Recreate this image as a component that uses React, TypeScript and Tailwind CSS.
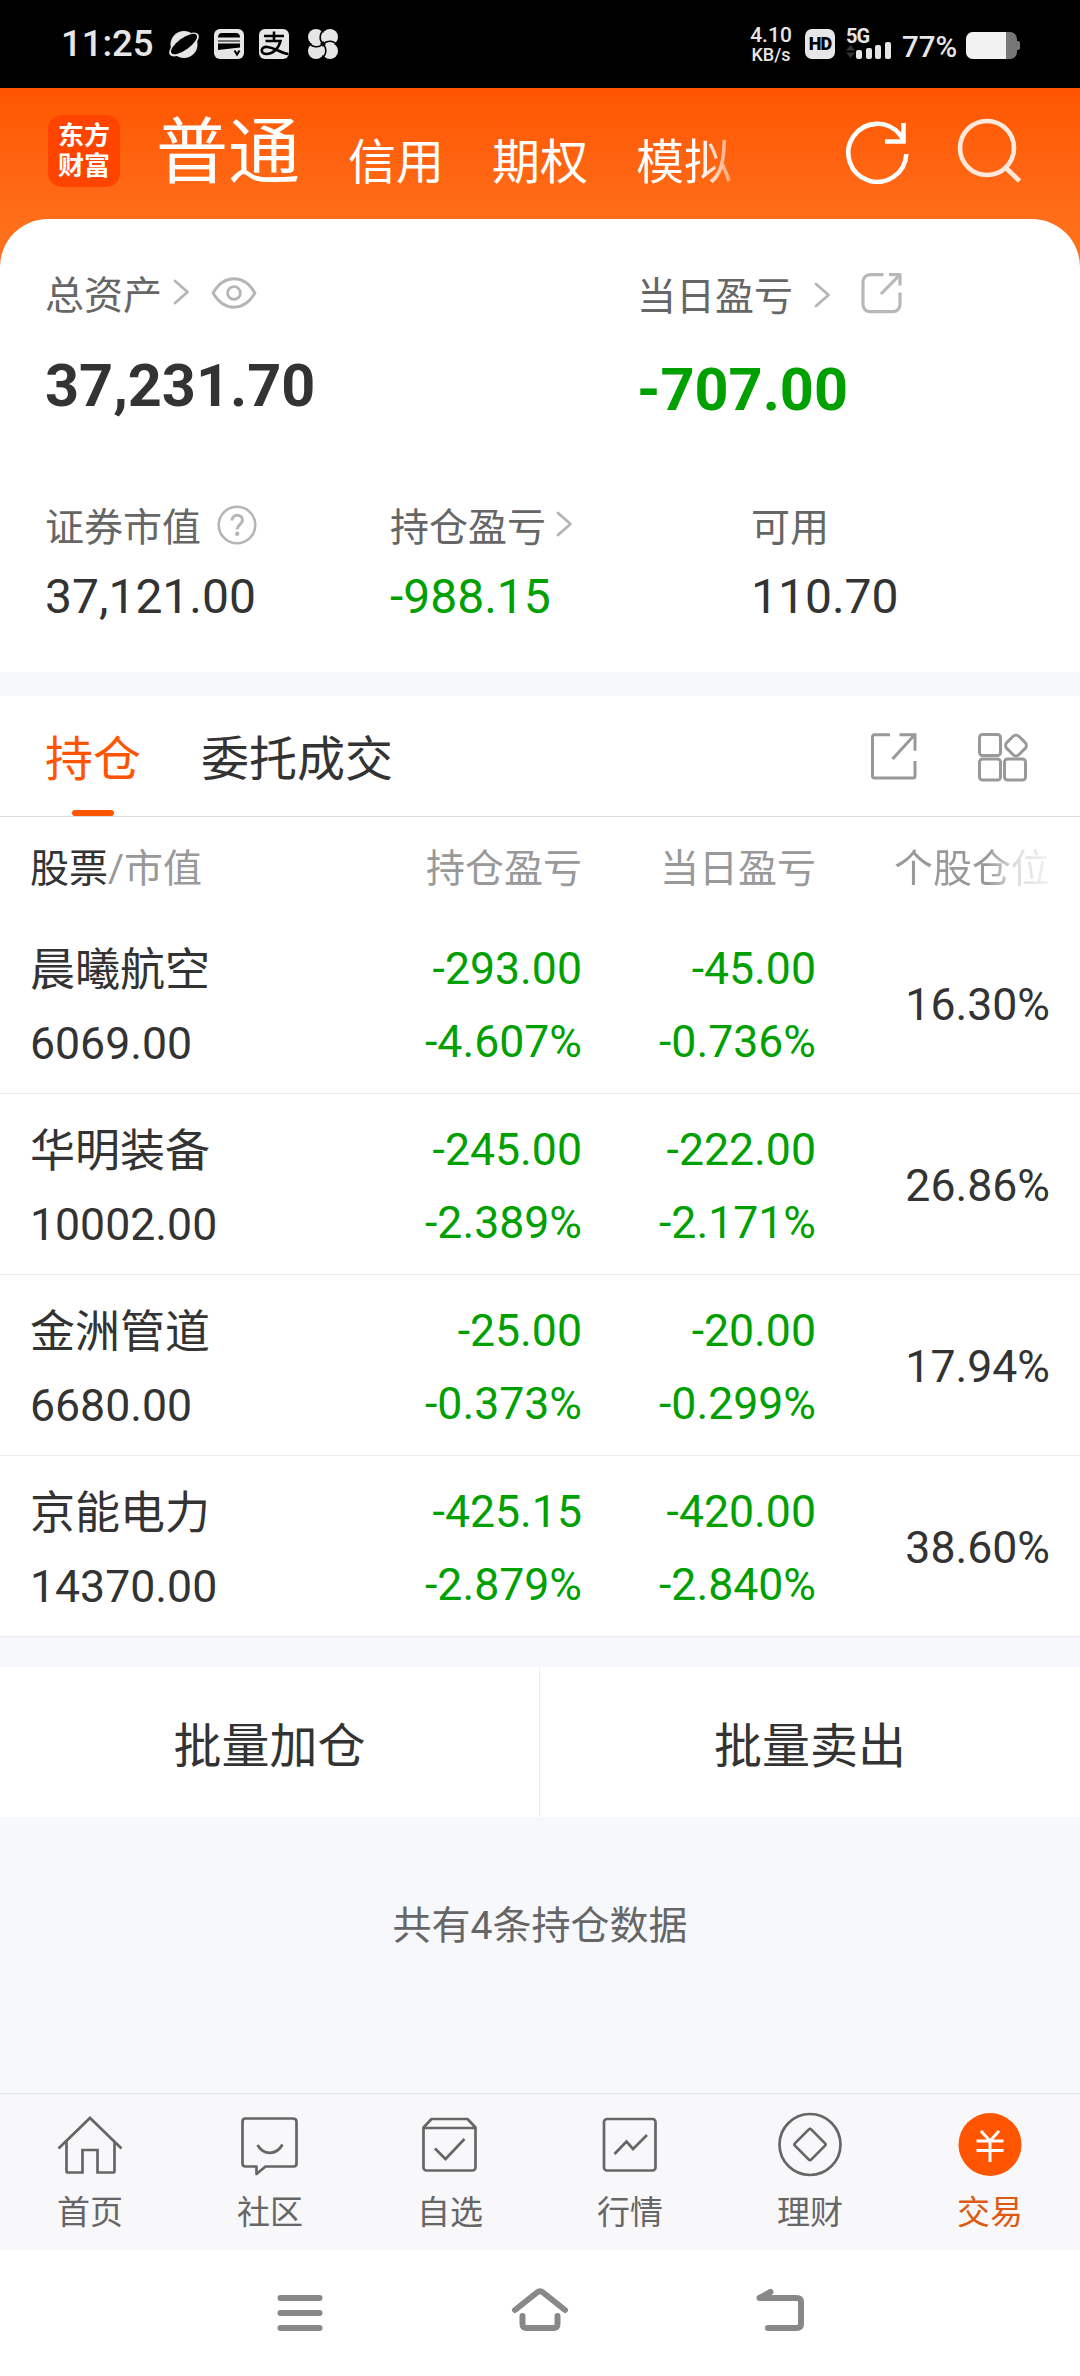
import type { ReactNode } from 'react';

interface Holding {
  name: string;
  value: string;
  profit: string;
  profitRate: string;
  today: string;
  todayRate: string;
  share: string;
}

const HOLDINGS: Holding[] = [
  { name: '晨曦航空', value: '6069.00', profit: '-293.00', profitRate: '-4.607%', today: '-45.00', todayRate: '-0.736%', share: '16.30%' },
  { name: '华明装备', value: '10002.00', profit: '-245.00', profitRate: '-2.389%', today: '-222.00', todayRate: '-2.171%', share: '26.86%' },
  { name: '金洲管道', value: '6680.00', profit: '-25.00', profitRate: '-0.373%', today: '-20.00', todayRate: '-0.299%', share: '17.94%' },
  { name: '京能电力', value: '14370.00', profit: '-425.15', profitRate: '-2.879%', today: '-420.00', todayRate: '-2.840%', share: '38.60%' },
];

const TABS = [
  { label: '首页', icon: <HomeIcon /> },
  { label: '社区', icon: <ChatIcon /> },
  { label: '自选', icon: <WatchlistIcon /> },
  { label: '行情', icon: <MarketIcon /> },
  { label: '理财', icon: <WealthIcon /> },
  { label: '交易', icon: <TradeIcon />, active: true },
];

export default function App() {
  return (
    <div className="flex h-[2376px] w-[1080px] flex-col overflow-hidden bg-[#f6f8fb] font-['Roboto','Noto_Sans_CJK_SC',sans-serif] text-[#333]">
      <StatusBar />
      <Header />
      <Summary />
      <Holdings />
      <BatchActions />
      <p className="mt-[81px] h-14 text-center text-[39px] leading-[56px] text-[#666]">共有4条持仓数据</p>
      <TabBar />
      <SystemNav />
    </div>
  );
}

function StatusBar() {
  return (
    <div className="flex h-[88px] shrink-0 items-start bg-black pl-[61px] text-[#e6e6e6]">
      <span className="mt-5 w-[107px] text-[36.5px] font-medium leading-[48px]">11:25</span>
      <svg className="mt-7 h-8 w-[172px]" viewBox="0 0 172 32">
        <circle cx="16" cy="16.500" r="13.500" fill="#e6e6e6" />
        <ellipse cx="16" cy="16.500" rx="17.500" ry="7.500" transform="rotate(-36 16 16.500)" fill="#e6e6e6" />
        <ellipse cx="16" cy="16" rx="15.500" ry="5.800" transform="rotate(-36 16 16)" fill="#000" />
        <rect x="46" y="1" width="30" height="30" rx="6" fill="#e6e6e6" />
        <path d="M50 9.500q0-4.500 4-4.500h14q4 0 4 4.500zM50 12.500h22v1H50zM50 15.500h22v4l-22 2.500z" fill="#000" />
        <path d="m66.500 22.500 2.500 4 2.500-4" fill="none" stroke="#000" strokeWidth="2" />
        <rect x="91" y="1" width="30" height="30" rx="6" fill="#e6e6e6" />
        <path d="M96 8h20M106 3.500v9.500M97.500 13h15c-2 8-8 13-14 13-7 0-6-8 1-7 8 1 13 6 21 7" fill="none" stroke="#000" strokeWidth="2.600" />
        <g fill="#e6e6e6">
          <circle cx="148" cy="9" r="8" />
          <circle cx="162" cy="9" r="8" />
          <circle cx="162" cy="23" r="8" />
          <circle cx="148" cy="23" r="8" />
        </g>
        <path d="M155 16c-4-4-4-11 2-15M155 16c4-4 11-4 15 2M155 16c4 4 4 11-2 15M155 16c-4 4-11 4-15-2" fill="none" stroke="#000" strokeWidth="1.600" />
      </svg>
      <div className="ml-auto flex items-start pr-[60px]">
        <div className="mt-[25px] w-[46px] text-center font-medium">
          <div className="text-[21px] leading-[20px]">4.10</div>
          <div className="text-[18px] leading-[19px]">KB/s</div>
        </div>
        <span className="ml-[11px] mt-[29px] flex h-[30px] w-[30px] items-center justify-center rounded-[7px] bg-[#e6e6e6] text-[18px] font-black leading-none tracking-[-1px] text-black">
          HD
        </span>
        <div className="ml-[11px] mt-[27px] w-[46px]">
          <div className="text-[20px] font-bold leading-[19px] tracking-[-1px]">5G</div>
          <svg className="-mt-[4px] h-[18px] w-[46px]" viewBox="0 0 46 18">
            <path d="M0 8.500 4.500 3 9 8.500zM0 10.500 4.500 16 9 10.500z" fill="#333" />
            <rect x="10" y="8" width="6" height="9" rx="2" fill="#e6e6e6" />
            <rect x="20" y="6" width="6" height="11" rx="2" fill="#e6e6e6" />
            <rect x="29" y="3" width="6" height="14" rx="2" fill="#e6e6e6" />
            <rect x="39" y="0" width="6" height="17" rx="2" fill="#e6e6e6" />
          </svg>
        </div>
        <span className="ml-[10px] mt-[29px] w-[64px] text-[29.5px] font-medium leading-[36px]">77%</span>
        <svg className="mt-8 h-[27px] w-[54px]" viewBox="0 0 54 27">
          <rect width="51" height="27" rx="7" fill="#777" />
          <rect x="48" y="9" width="6" height="9" rx="2" fill="#777" />
          <path d="M7 0h33v27H7a7 7 0 0 1-7-7V7a7 7 0 0 1 7-7z" fill="#f2f2f2" />
        </svg>
      </div>
    </div>
  );
}

function Header() {
  return (
    <header className="flex h-[185px] shrink-0 items-start bg-linear-to-b from-[#ff5500] to-[#ff6f1a] to-75% pl-12 text-white">
      <div className="mt-[27px] flex h-[72px] w-[72px] flex-col items-center justify-center rounded-[14px] bg-[#ff4400] text-[26px] font-bold leading-[30px]">
        <span>东方</span>
        <span>财富</span>
      </div>
      <nav className="ml-9 flex w-[582px] gap-12 overflow-hidden whitespace-nowrap text-[48px]">
        <span className="mt-[17px] text-[72px] leading-[96px]">普通</span>
        <span className="mt-[43px] leading-[64px]">信用</span>
        <span className="mt-[43px] leading-[64px]">期权</span>
        <span className="mt-[43px] bg-linear-to-r from-white from-68% to-white/40 to-100% bg-clip-text leading-[64px] text-transparent">
          模拟
        </span>
      </nav>
      <svg className="ml-[106px] mt-7 h-[68px] w-[180px]" viewBox="0 -4 180 68" fill="none">
        <path d="M62.300 34a29 29 0 1 1-6.500-19.500L60 20" stroke="#fff" strokeWidth="4.600" />
        <path d="M59.500 3v18.500H41" stroke="#fff" strokeWidth="4.600" />
        <circle cx="143" cy="28" r="27" stroke="#ffe9dc" strokeWidth="4.600" />
        <path d="m161 47 14.500 14" stroke="#ffe9dc" strokeWidth="4.600" />
      </svg>
    </header>
  );
}

function Summary() {
  return (
    <section className="-mt-[54px] h-[453px] shrink-0 rounded-t-[48px] bg-white">
      <div className="flex pt-[51px]">
        <div className="w-[592px] pl-[45px]">
          <div className="flex h-[52px] items-center">
            <Label>总资产</Label>
            <Chevron className="-mt-2 ml-[10px]" />
            <svg className="-mt-[6px] ml-[21px] h-8 w-[46px]" viewBox="0 0 46 32" fill="none" stroke="#b5b5b5" strokeWidth="2.800">
              <path d="M2 16C13-3 33-3 44 16 33 35 13 35 2 16z" strokeLinejoin="round" />
              <circle cx="23" cy="16" r="6.400" />
            </svg>
          </div>
          <div className="mt-[29px] text-[59.4px] font-bold leading-[70px]">37,231.70</div>
        </div>
        <div className="pl-[45px]">
          <div className="mt-px flex h-[52px] items-center">
            <Label>当日盈亏</Label>
            <Chevron className="-mt-1 ml-[20px]" />
            <svg className="-mt-2 ml-[30px] h-[42px] w-[42px]" viewBox="0 0 42 42" fill="none" stroke="#b8b8b8" strokeWidth="3.200" strokeLinejoin="round">
              <path d="M22.500 2.600H9a7 7 0 0 0-7 7v23a7 7 0 0 0 7 7h23a7 7 0 0 0 7-7V20.500M28 2.600h11v11M39 2.600 20 22" />
            </svg>
          </div>
          <div className="mt-[32px] text-[59.4px] font-bold leading-[70px] text-[#00a000]">-707.00</div>
        </div>
      </div>
      <div className="mt-[77px] flex pl-[45px]">
        <Metric className="w-[345px]" label="证券市值" value="37,121.00">
          <svg className="-mt-[6px] ml-4 h-[40px] w-[40px]" viewBox="0 0 40 40">
            <circle cx="20" cy="20" r="18.300" fill="none" stroke="#b5b5b5" strokeWidth="2.600" />
            <path d="M15 15.500c0-7 10.500-7 10.500-.5 0 4.500-5.300 4.200-5.300 9.300" fill="none" stroke="#b5b5b5" strokeWidth="3" />
            <circle cx="20.200" cy="28.800" r="2.200" fill="#b5b5b5" />
          </svg>
        </Metric>
        <Metric className="w-[361px]" label="持仓盈亏" value="-988.15" loss>
          <Chevron className="-mt-2 ml-[9px]" />
        </Metric>
        <Metric label="可用" value="110.70" />
      </div>
    </section>
  );
}

function Label({ children }: { children: ReactNode }) {
  return <span className="text-[39px] leading-[52px] text-[#666]">{children}</span>;
}

interface MetricProps {
  label: string;
  value: string;
  loss?: boolean;
  className?: string;
  children?: ReactNode;
}

function Metric({ label, value, loss, className = '', children }: MetricProps) {
  return (
    <div className={className}>
      <div className="flex h-[52px] items-center">
        <Label>{label}</Label>
        {children}
      </div>
      <div className={`mt-[13px] text-[48px] leading-[60px] ${loss ? 'text-[#00a000]' : ''}`}>{value}</div>
    </div>
  );
}

function Chevron({ className }: { className: string }) {
  return (
    <svg className={`h-[26px] w-[18px] ${className}`} viewBox="0 0 18 26" fill="none" stroke="#b5b5b5" strokeWidth="2.800">
      <path d="m3 2 12.500 11L3 24" strokeLinecap="round" strokeLinejoin="round" />
    </svg>
  );
}

function Holdings() {
  return (
    <section className="mt-6 shrink-0 bg-white">
      <div className="flex h-[121px] border-b border-[#dedede] pl-[45px] text-[48px] leading-[64px]">
        <div className="flex w-24 flex-col items-center">
          <span className="mt-8 text-[#ff5500]">持仓</span>
          <span className="mt-[18px] h-[6px] w-[42px] rounded-full bg-[#ff5500]" />
        </div>
        <span className="ml-[60px] mt-8">委托成交</span>
        <svg className="ml-auto mr-[50px] mt-9 h-[50px] w-[160px]" viewBox="0 0 160 50" fill="none" stroke="#999" strokeWidth="3">
          <path d="M20 2.700H4.500a2 2 0 0 0-2 2V44a2 2 0 0 0 2 2H43a2 2 0 0 0 2-2V29M29.500 2.700H45v16M44 3.500 22.500 27" />
          <rect x="109.500" y="2.500" width="21" height="21" rx="3" />
          <rect x="109.500" y="27" width="21" height="21" rx="3" />
          <rect x="134.500" y="27" width="21" height="21" rx="3" />
          <rect x="137.500" y="5" width="17" height="17" rx="4" transform="rotate(45 146 13.500)" />
        </svg>
      </div>
      <div className="flex h-24 pl-[30px] pr-[30px] text-[39px] leading-[104px] text-[#999]">
        <span className="w-[251px]">
          <span className="text-[#333]">股票</span>/市值
        </span>
        <span className="w-[301px] text-right">持仓盈亏</span>
        <span className="w-[234px] text-right">当日盈亏</span>
        <span className="ml-auto bg-linear-to-r from-[#999] from-60% via-[#ddd] via-78% to-[#f2f2f2] bg-clip-text text-transparent">
          个股仓位
        </span>
      </div>
      {HOLDINGS.map((h) => (
        <div key={h.name} className="flex h-[181px] border-b border-[#ececec] pl-[30px] pr-[30px] text-[44.6px] leading-[73px]">
          <div className="w-[251px] pt-[21px]">
            <div className="text-[45px] leading-[74px]">{h.name}</div>
            <div>{h.value}</div>
          </div>
          <div className="w-[301px] pt-5 text-right text-[#00a000]">
            <div>{h.profit}</div>
            <div>{h.profitRate}</div>
          </div>
          <div className="w-[234px] pt-5 text-right text-[#00a000]">
            <div>{h.today}</div>
            <div>{h.todayRate}</div>
          </div>
          <div className="ml-auto pt-14">{h.share}</div>
        </div>
      ))}
    </section>
  );
}

function BatchActions() {
  return (
    <div className="mt-[30px] grid h-[150px] shrink-0 grid-cols-2 bg-white text-center text-[48px]">
      <button className="border-r border-[#ececec] pt-[10px] leading-[140px]">批量加仓</button>
      <button className="pt-[10px] leading-[140px]">批量卖出</button>
    </div>
  );
}

function TabBar() {
  return (
    <nav className="mt-auto grid h-[157px] shrink-0 grid-cols-6 border-t border-[#e2e4e6] bg-[#f8f8fa] text-[33px] text-[#666]">
      {TABS.map((tab) => (
        <div key={tab.label} className="flex flex-col items-center pt-[17px]">
          <svg className="h-[68px] w-[68px]" viewBox="0 0 68 68" fill="none" stroke="#666" strokeWidth="2.700">
            {tab.icon}
          </svg>
          <span className={`mt-3 leading-[44px] ${tab.active ? 'text-[#dc5a14]' : ''}`}>{tab.label}</span>
        </div>
      ))}
    </nav>
  );
}

function HomeIcon() {
  return (
    <path d="M2.500 37.500 34 7l31.500 30.500M10.500 30v30a1.500 1.500 0 0 0 1.500 1.500h14.500V39h15v22.500H57a1.500 1.500 0 0 0 1.500-1.500V30" />
  );
}

function ChatIcon() {
  return (
    <>
      <path d="M9.500 7.500h47q4 0 4 3v42q0 3-3 3h-28l-9 7.500v-7.500h-11q-3 0-3-3v-42q0-3 3-3z" strokeLinejoin="round" />
      <path d="M21.500 34c6 10.500 19 10.500 25-.5" />
    </>
  );
}

function WatchlistIcon() {
  return (
    <>
      <path d="M7.500 16.500v40a3 3 0 0 0 3 3h46a3 3 0 0 0 3-3v-40l-8-8.500h-36zM7.500 17h52" strokeLinejoin="round" />
      <path d="M19 37.500 29.500 48 48.500 28" />
    </>
  );
}

function MarketIcon() {
  return (
    <>
      <rect x="8" y="8" width="51.500" height="51.500" rx="3" />
      <path d="m18.500 43 12-12.500 6.500 7.500 14-14" />
    </>
  );
}

function WealthIcon() {
  return (
    <>
      <circle cx="34" cy="33.500" r="30.500" />
      <rect x="22.500" y="22" width="23" height="23" rx="2" transform="rotate(45 34 33.500)" />
    </>
  );
}

function TradeIcon() {
  return (
    <>
      <circle cx="34" cy="33.500" r="31.500" fill="#ff5500" stroke="none" />
      <path d="m25 20 9 10 9-10M34 30v21M20.500 30h27M20.500 39.500h27" stroke="#fff" strokeWidth="3" />
    </>
  );
}

function SystemNav() {
  return (
    <div className="flex h-[126px] shrink-0 items-start justify-center gap-[180px] bg-white pt-8">
      {/* 60px boxes, so the centres sit 240px apart */}
      <svg className="h-[60px] w-[60px]" viewBox="0 0 60 60" fill="none" stroke="#888" strokeWidth="6" strokeLinecap="round">
        <path d="M10.500 16h39M10.500 31h39M10.500 46h39" />
      </svg>
      <svg className="h-[60px] w-[60px]" viewBox="0 0 60 60" fill="none" stroke="#888" strokeWidth="6" strokeLinecap="round" strokeLinejoin="round">
        <path d="M5 28 27 10.500q3-2.500 6 0L55 28M12.500 34v8q0 4 4 4h27q4 0 4-4v-8" />
      </svg>
      <svg className="h-[60px] w-[60px]" viewBox="0 0 60 60" fill="none" stroke="#888" strokeWidth="6" strokeLinecap="round" strokeLinejoin="round">
        <path d="M20.500 10 9.500 16h37q4.500 0 4.500 4v22q0 4-4.500 4H18" />
      </svg>
    </div>
  );
}
